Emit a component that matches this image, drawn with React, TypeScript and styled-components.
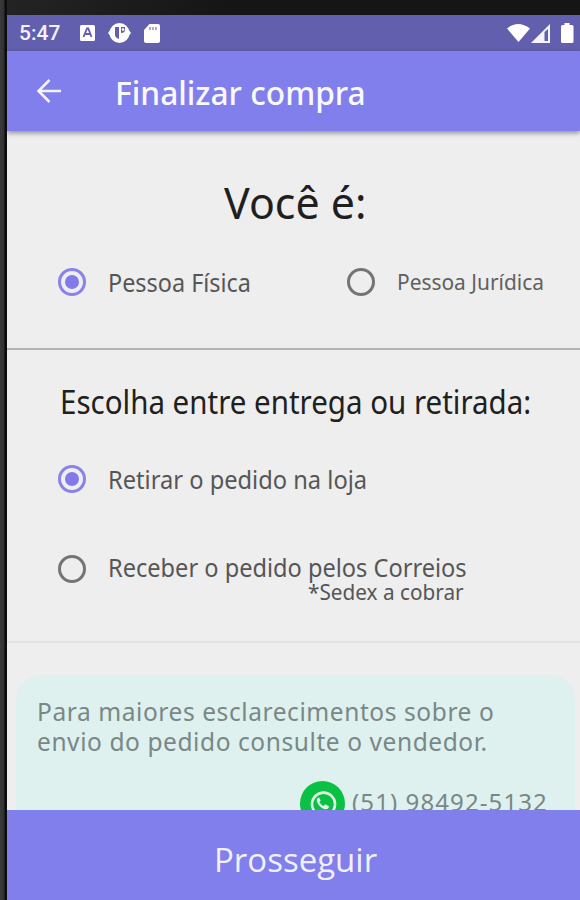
import React, { useState } from "react";
import styled, { createGlobalStyle } from "styled-components";

const GlobalStyle = createGlobalStyle`
  * { box-sizing: border-box; }
  body { margin: 0; background: #1b1b1b; overflow: hidden; }
`;

const Device = styled.div`
  width: 580px;
  height: 900px;
  padding: 15px 0 0 7px;
  background: linear-gradient(90deg, #393a3a 0, #303131 4px, #090909 5px, #111 7px, transparent 7px),
    linear-gradient(90deg, #242424, #151515 40%);
  font-family: "Noto Sans", sans-serif;
`;
const Screen = styled.div`
  display: flex;
  flex-direction: column;
  height: 885px;
  overflow: hidden;
  background: #eeeeee;
`;
const StatusBar = styled.header`
  display: flex;
  align-items: center;
  flex: 0 0 36px;
  padding: 0 3px 0 12px;
  background: #625fae;
  color: #fff;
`;
const StatusIcons = styled.div<{ $end?: boolean }>`
  display: flex;
  align-items: center;
  gap: ${(p) => (p.$end ? 0 : 12)}px;
  margin-left: ${(p) => (p.$end ? "auto" : "19px")};
`;
const Icon = styled.svg`
  display: block;
  flex: none;
`;
const AppBar = styled.div`
  display: flex;
  align-items: center;
  flex: 0 0 80px;
  padding-left: 29px;
  background: #817feb;
  color: #fff;
  box-shadow: 0 2px 5px rgba(0, 0, 0, 0.42);
  z-index: 1;
`;
const BackButton = styled.button`
  width: 79px;
  padding: 0;
  border: 0;
  background: none;
  color: #f4f4ff;
`;
const Text = styled.span<{ $size: number; $stretch?: number; $weight?: number; $color?: string; $family?: string; $spacing?: number }>`
  display: block;
  margin: 0;
  font-family: ${(p) => p.$family ?? '"Noto Sans"'}, sans-serif;
  font-size: ${(p) => p.$size}px;
  font-weight: ${(p) => p.$weight ?? 400};
  line-height: 30px;
  letter-spacing: ${(p) => p.$spacing ?? 0}px;
  color: ${(p) => p.$color ?? "#5c5c5c"};
  white-space: nowrap;
  transform: scaleX(${(p) => p.$stretch ?? 1});
  transform-origin: left;
`;
const Title = styled.div`
  padding-top: 3px;
`;
const Content = styled.main`
  flex: 1;
  min-height: 0;
  overflow: hidden;
`;
const Section = styled.section<{ $height: number; $line: string }>`
  height: ${(p) => p.$height}px;
  border-bottom: 2px solid ${(p) => p.$line};
`;
const Question = styled.div`
  padding: 56px 0 0 217px;
`;
const Subheading = styled.div`
  padding: 37px 0 0 53px;
`;
const PersonOptions = styled.div`
  display: grid;
  grid-template-columns: 289px 1fr;
  margin: 50px 0 0 51px;
`;
const DeliveryOptions = styled.div`
  display: grid;
  gap: 60px;
  margin: 47px 0 0 51px;
`;
const Option = styled.button<{ $lift?: number }>`
  display: flex;
  align-items: center;
  gap: 22px;
  height: 30px;
  padding: 0;
  border: 0;
  background: none;
  text-align: left;

  & > span:last-child {
    margin-bottom: ${(p) => p.$lift ?? 0}px;
  }
`;
const Radio = styled.span<{ $on: boolean }>`
  display: grid;
  place-items: center;
  flex: none;
  width: 28px;
  height: 28px;
  border: 3px solid ${(p) => (p.$on ? "#8a82e8" : "#747474")};
  border-radius: 50%;
  &::after {
    content: "";
    width: 14px;
    height: 14px;
    border-radius: 50%;
    background: ${(p) => (p.$on ? "#827ae8" : "transparent")};
  }
`;
const Note = styled.div`
  padding: 0 0 0 301px;
  margin-top: -8px;
`;
const Card = styled.aside`
  height: 180px;
  margin: 32px 5px 0 9px;
  padding: 22px 0 0 21px;
  border-radius: 24px;
  background: #dff1ee;
`;
const Contact = styled.div`
  display: flex;
  align-items: center;
  gap: 7px;
  margin: 24px 0 0 263px;

  & > span {
    margin-bottom: 3px;
  }
`;
const Proceed = styled.button`
  flex: 0 0 90px;
  display: flex;
  align-items: center;
  padding: 9px 0 0 207px;
  border: 0;
  background: #817feb;
`;

const LABEL = "#565656";
const MUTED = "#788887";

export default function App() {
  const [person, setPerson] = useState("fisica");
  const [delivery, setDelivery] = useState("loja");
  return (
    <>
      <GlobalStyle />
      <Device>
        <Screen>
          <StatusBar>
            <Text $size={21} $family="Roboto" $weight={500} $color="#f3f2ff">5:47</Text>
            <StatusIcons>
              <Icon width="17" height="18" viewBox="0 0 17 18">
                <rect x="1" y="1" width="15" height="16" rx="1.5" fill="#fff" />
                <path d="M4.5 13 8 4.5h1.3L12.5 13M6 10h5" fill="none" stroke="#625fae" strokeWidth="1.8" />
              </Icon>
              <Icon width="23" height="22" viewBox="0 0 23 22">
                <circle cx="11.5" cy="11" r="10" fill="#fff" />
                <path d="M0 11 3 7v8zM23 11l-3-4v8z" fill="#fff" />
                <path d="M7 5h4v12Q7 15.500 7 13zM13 5h4v2.500Q17 11 13 11z" fill="#625fae" />
                <circle cx="15" cy="7.500" r="1.300" fill="#fff" />
              </Icon>
              <Icon width="18" height="21" viewBox="0 0 18 21">
                <path d="M6.5 1H15q2 0 2 2v15q0 2-2 2H3q-2 0-2-2V7z" fill="#fff" />
                <path d="M7 4v3M10 4v3M13 4v3" stroke="#9290c9" strokeWidth="1.5" />
              </Icon>
            </StatusIcons>
            <StatusIcons $end>
              <Icon width="24" height="20" viewBox="0 0 24 20">
                <path d="M0 5.5Q11-3.500 23 5.500L11.500 19z" fill="#fff" />
              </Icon>
              <Icon width="20" height="21" viewBox="0 0 20 21">
                <path d="M0 20 19 1v19z" fill="#f4f3ff" />
                <path d="M13.5 9 17 6v12h-3.5z" fill="#625fae" />
              </Icon>
              <Icon width="26" height="22" viewBox="-1 0 26 22">
                <path d="M12.500 1h5v2H20q1.500 0 1.500 1.500v15Q21.500 21 20 21h-9.500Q9 21 9 19.500v-15Q9 3 10.500 3h2z" fill="#fff" />
              </Icon>
            </StatusIcons>
          </StatusBar>
          <AppBar>
            <BackButton aria-label="Voltar">
              <Icon width="26" height="26" viewBox="0 0 26 26" fill="none" stroke="currentColor" strokeWidth="2.5">
                <path d="M25 13H3M13.500 2 2.500 13l11 11" />
              </Icon>
            </BackButton>
            <Title>
              <Text $size={33} $weight={500} $stretch={0.96} $color="#f9f9ff">Finalizar compra</Text>
            </Title>
          </AppBar>
          <Content>
            <Section $height={219} $line="#b5b5b5">
              <Question>
                <Text as="h1" $size={44} $stretch={0.975} $color="#1f1f1f">Você é:</Text>
              </Question>
              <PersonOptions>
                <Option onClick={() => setPerson("fisica")}>
                  <Radio $on={person === "fisica"} />
                  <Text $size={26} $stretch={0.9} $color={LABEL}>Pessoa Física</Text>
                </Option>
                <Option $lift={2} onClick={() => setPerson("juridica")}>
                  <Radio $on={person === "juridica"} />
                  <Text $size={22} $stretch={0.95} $color="#606060">Pessoa Jurídica</Text>
                </Option>
              </PersonOptions>
            </Section>
            <Section $height={293} $line="#e2e2e2">
              <Subheading>
                <Text $size={32} $stretch={0.922} $color="#202020">Escolha entre entrega ou retirada:</Text>
              </Subheading>
              <DeliveryOptions>
                <Option onClick={() => setDelivery("loja")}>
                  <Radio $on={delivery === "loja"} />
                  <Text $size={26} $stretch={0.91} $color={LABEL}>Retirar o pedido na loja</Text>
                </Option>
                <Option $lift={4} onClick={() => setDelivery("correios")}>
                  <Radio $on={delivery === "correios"} />
                  <Text $size={26} $stretch={0.907} $color={LABEL}>Receber o pedido pelos Correios</Text>
                </Option>
              </DeliveryOptions>
              <Note>
                <Text $size={22} $stretch={0.943} $color={LABEL}>*Sedex a cobrar</Text>
              </Note>
            </Section>
            <Card>
              <Text $size={24.5} $spacing={0.58} $color={MUTED}>Para maiores esclarecimentos sobre o</Text>
              <Text $size={24.5} $spacing={0.58} $color={MUTED}>envio do pedido consulte o vendedor.</Text>
              <Contact>
                <Icon width="45" height="45" viewBox="0 0 45 45">
                  <circle cx="22.500" cy="22.500" r="22.500" fill="#0bc143" />
                  <path d="m12 35 1.600-6a11.500 11.500 0 1 1 4.300 4.200z" fill="none" stroke="#dff8e5" strokeWidth="2.600" />
                  <path d="M19 16.500c-2 0-2.800 3-1.400 5.500 1.900 3.600 4.400 5.700 7.600 6.200 2.300.4 4-1.300 3.700-3l-3.700-1.900-1.700 1.700c-1.900-.8-3.400-2.400-4-4l1.200-1.500z" fill="#dff8e5" />
                </Icon>
                <Text $size={24} $spacing={1.1} $color={MUTED}>(51) 98492-5132</Text>
              </Contact>
            </Card>
          </Content>
          <Proceed>
            <Text $size={33} $family="Open Sans" $color="#f1f0ff">Prosseguir</Text>
          </Proceed>
        </Screen>
      </Device>
    </>
  );
}
